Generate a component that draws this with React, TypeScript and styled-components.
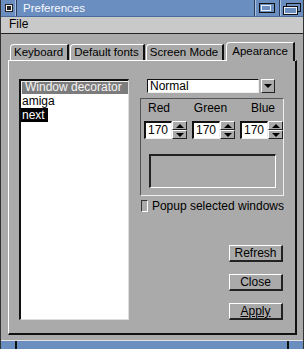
import styled, { createGlobalStyle } from "styled-components"

const GlobalStyle = createGlobalStyle`
    html, body {
        margin: 0;
        padding: 0;
        background: #aaaaaa;
    }
    * {
        box-sizing: border-box;
    }
`

const Window = styled.div`
    width: 304px;
    height: 349px;
    display: flex;
    flex-direction: column;
    background-color: #aaaaaa;
    font-family: "Liberation Sans", Arial, sans-serif;
    font-size: 12px;
    color: #000;
    border-left: 1px solid #333;
    border-right: 1px solid #333;
    overflow: hidden;
`

const TitleBar = styled.div`
    height: 17px;
    display: flex;
    align-items: stretch;
    background-color: #6a8ec0;
    border-bottom: 1px solid #4a6a98;
`

const Gadget = styled.div<{ $w: number; $side?: "left" | "right" }>`
    width: ${p => p.$w}px;
    display: flex;
    align-items: center;
    justify-content: center;
    border-${p => (p.$side === "left" ? "right" : "left")}: 1px solid #2c3e5c;
    box-shadow: inset ${p => (p.$side === "left" ? "-1px" : "1px")} 0 0 #a8c0e0;
`

const Title = styled.div`
    flex: 1;
    color: #f6f8fc;
    font-size: 11.5px;
    padding-left: 6px;
    line-height: 16px;
`

const MenuBar = styled.div`
    height: 17px;
    background-color: #c9c9c9;
    border-bottom: 1px solid #222;
    padding-left: 8px;
    line-height: 15px;
    font-size: 12px;
`

const Body = styled.div`
    flex: 1;
    display: flex;
    flex-direction: column;
    padding: 7px 6px 5px 7px;
`

const TabRow = styled.div`
    height: 19px;
    display: flex;
    align-items: flex-end;
    padding-left: 2px;
    gap: 1px;
    position: relative;
    z-index: 1;
`

const Tab = styled.div<{ $active?: boolean }>`
    height: ${p => (p.$active ? 19 : 16)}px;
    padding: 0 ${p => (p.$active ? 5 : 4)}px 0 ${p => (p.$active ? 5 : 3)}px;
    border-top: 1px solid #fff;
    border-left: 1px solid #fff;
    border-right: 2px solid #111;
    border-top-left-radius: 4px;
    background-color: #aaaaaa;
    font-size: 11.5px;
    line-height: ${p => (p.$active ? 17 : 15)}px;
    margin-bottom: ${p => (p.$active ? -1 : 0)}px;
    margin-left: ${p => (p.$active ? 1 : 0)}px;
    white-space: nowrap;
`

const Panel = styled.div`
    flex: 1;
    display: grid;
    grid-template-columns: 110px 144px;
    column-gap: 11px;
    padding: 18px 10px 13px 10px;
    border-top: 1px solid #fff;
    border-left: 1px solid #fff;
    border-right: 2px solid #111;
    border-bottom: 2px solid #111;
`

const ListBox = styled.div`
    background-color: #fff;
    border-top: 2px solid #111;
    border-left: 2px solid #111;
    border-right: 1px solid #ddd;
    border-bottom: 1px solid #ddd;
    display: flex;
    flex-direction: column;
    align-items: flex-start;
`

const ListHeader = styled.div`
    width: 100%;
    height: 13px;
    background-color: #7c7c7c;
    color: #f4f4f4;
    border-top: 1px solid #eee;
    border-left: 1px solid #eee;
    padding-left: 3px;
    line-height: 11px;
    white-space: nowrap;
`

const ListItem = styled.div<{ $selected?: boolean }>`
    height: 14px;
    line-height: 14px;
    padding: 0 3px 0 1px;
    background-color: ${p => (p.$selected ? "#000" : "transparent")};
    color: ${p => (p.$selected ? "#fff" : "#000")};
`

const RightColumn = styled.div`
    display: flex;
    flex-direction: column;
`

const DropRow = styled.div`
    display: flex;
    gap: 2px;
    padding-left: 7px;
    height: 14px;
`

const Entry = styled.div<{ $w: number }>`
    width: ${p => p.$w}px;
    height: 100%;
    background-color: #fff;
    border-top: 1px solid #111;
    border-left: 1px solid #111;
    border-right: 1px solid #eee;
    border-bottom: 1px solid #eee;
    padding-left: 2px;
    line-height: 12px;
`

const ArrowButton = styled.div`
    width: 14px;
    height: 14px;
    background-color: #aaaaaa;
    border-top: 1px solid #fff;
    border-left: 1px solid #fff;
    border-right: 1px solid #222;
    border-bottom: 1px solid #222;
    display: flex;
    align-items: center;
    justify-content: center;
`

const Triangle = styled.div<{ $dir: "up" | "down"; $size: number }>`
    width: 0;
    height: 0;
    border-left: ${p => p.$size}px solid transparent;
    border-right: ${p => p.$size}px solid transparent;
    ${p =>
        p.$dir === "down"
            ? `border-top: ${p.$size}px solid #000;`
            : `border-bottom: ${p.$size}px solid #000;`}
`

const GroupBox = styled.div`
    margin-top: 5px;
    height: 98px;
    border-top: 1px solid #555;
    border-left: 1px solid #555;
    border-right: 1px solid #eee;
    border-bottom: 1px solid #eee;
    display: flex;
    flex-direction: column;
`

const LabelRow = styled.div`
    display: flex;
    justify-content: space-between;
    padding: 2px 8px 0 7px;
    height: 20px;
    line-height: 14px;
`

const SpinRow = styled.div`
    display: flex;
    gap: 5px;
    padding-left: 3px;
    margin-top: 2px;
`

const Spinner = styled.div`
    display: flex;
    height: 18px;
`

const SpinEntry = styled.div`
    width: 28px;
    height: 18px;
    background-color: #fff;
    border-top: 2px solid #111;
    border-left: 2px solid #111;
    border-right: 1px solid #eee;
    border-bottom: 1px solid #eee;
    line-height: 15px;
    padding-left: 2px;
`

const SpinButtons = styled.div`
    width: 15px;
    display: flex;
    flex-direction: column;
`

const SpinHalf = styled.div`
    flex: 1;
    background-color: #aaaaaa;
    border-top: 1px solid #fff;
    border-left: 1px solid #fff;
    border-right: 1px solid #222;
    border-bottom: 1px solid #222;
    display: flex;
    align-items: center;
    justify-content: center;
`

const ColorPreview = styled.div`
    margin: 15px 0 0 8px;
    width: 127px;
    height: 34px;
    border-top: 2px solid #222;
    border-left: 2px solid #222;
    border-right: 1px solid #fff;
    border-bottom: 1px solid #fff;
`

const CheckRow = styled.label`
    margin-top: 3px;
    display: flex;
    align-items: center;
    gap: 4px;
    height: 13px;
    padding-left: 1px;
    white-space: nowrap;
`

const CheckBox = styled.span`
    width: 12px;
    height: 12px;
    border-top: 1px solid #333;
    border-left: 1px solid #333;
    border-right: 1px solid #fff;
    border-bottom: 1px solid #fff;
    background-color: #aaaaaa;
`

const ButtonStack = styled.div`
    margin-top: auto;
    display: flex;
    flex-direction: column;
    align-items: flex-end;
    gap: 12px;
    padding-right: 1px;
`

const Button = styled.div`
    width: 54px;
    height: 17px;
    border-top: 1px solid #fff;
    border-left: 1px solid #fff;
    border-right: 2px solid #222;
    border-bottom: 2px solid #222;
    text-align: center;
    line-height: 14px;
`

const Underlined = styled.span`
    text-decoration: underline;
`

const StatusBar = styled.div`
    height: 9px;
    display: flex;
    border-top: 1px solid #e0e0e0;
    background-color: #6a8ec0;
`

const StatusSegment = styled.div<{ $w?: number }>`
    ${p => (p.$w ? `width: ${p.$w}px;` : "flex: 1;")}
    border-right: 2px solid #111;
    &:last-child {
        border-right: none;
    }
`

function CloseIcon() {
    return (
        <svg width="8" height="8" viewBox="0 0 8 8">
            <rect x="0.5" y="0.5" width="7" height="7" fill="#f0f0f0" stroke="#222" />
            <rect x="2" y="2" width="4" height="4" fill="#222" />
        </svg>
    )
}

function ZoomIcon() {
    return (
        <svg width="18" height="12" viewBox="0 0 18 12">
            <rect x="1.5" y="1.5" width="15" height="9" fill="none" stroke="#111" />
            <rect x="3.5" y="3.5" width="9" height="5" fill="#6a8ec0" stroke="#e8eef8" />
        </svg>
    )
}

function DepthIcon() {
    return (
        <svg width="20" height="13" viewBox="0 0 20 13">
            <rect x="4.5" y="1.5" width="14" height="8" fill="#6a8ec0" stroke="#111" />
            <rect x="1.5" y="4.5" width="14" height="8" fill="#6a8ec0" stroke="#111" />
            <rect x="2.5" y="5.5" width="12" height="6" fill="none" stroke="#e8eef8" />
        </svg>
    )
}

function Spin({ value }: { value: number }) {
    return (
        <Spinner>
            <SpinEntry>{value}</SpinEntry>
            <SpinButtons>
                <SpinHalf><Triangle $dir="up" $size={4} /></SpinHalf>
                <SpinHalf><Triangle $dir="down" $size={4} /></SpinHalf>
            </SpinButtons>
        </Spinner>
    )
}

function App() {
    return <>
        <GlobalStyle />
        <Window>
            <TitleBar>
                <Gadget $w={16} $side="left"><CloseIcon /></Gadget>
                <Title>Preferences</Title>
                <Gadget $w={25}><ZoomIcon /></Gadget>
                <Gadget $w={24}><DepthIcon /></Gadget>
            </TitleBar>
            <MenuBar>File</MenuBar>
            <Body>
                <TabRow>
                    <Tab>Keyboard</Tab>
                    <Tab>Default fonts</Tab>
                    <Tab>Screen Mode</Tab>
                    <Tab $active>Apearance</Tab>
                </TabRow>
                <Panel>
                    <ListBox>
                        <ListHeader>Window decorator</ListHeader>
                        <ListItem>amiga</ListItem>
                        <ListItem $selected>next</ListItem>
                    </ListBox>
                    <RightColumn>
                        <DropRow>
                            <Entry $w={112}>Normal</Entry>
                            <ArrowButton><Triangle $dir="down" $size={4} /></ArrowButton>
                        </DropRow>
                        <GroupBox>
                            <LabelRow>
                                <span>Red</span>
                                <span>Green</span>
                                <span>Blue</span>
                            </LabelRow>
                            <SpinRow>
                                <Spin value={170} />
                                <Spin value={170} />
                                <Spin value={170} />
                            </SpinRow>
                            <ColorPreview />
                        </GroupBox>
                        <CheckRow>
                            <CheckBox />
                            Popup selected windows
                        </CheckRow>
                        <ButtonStack>
                            <Button>Refresh</Button>
                            <Button>Close</Button>
                            <Button><Underlined>Apply</Underlined></Button>
                        </ButtonStack>
                    </RightColumn>
                </Panel>
            </Body>
            <StatusBar>
                <StatusSegment $w={16} />
                <StatusSegment />
                <StatusSegment $w={14} />
            </StatusBar>
        </Window>
    </>
}

export default App
